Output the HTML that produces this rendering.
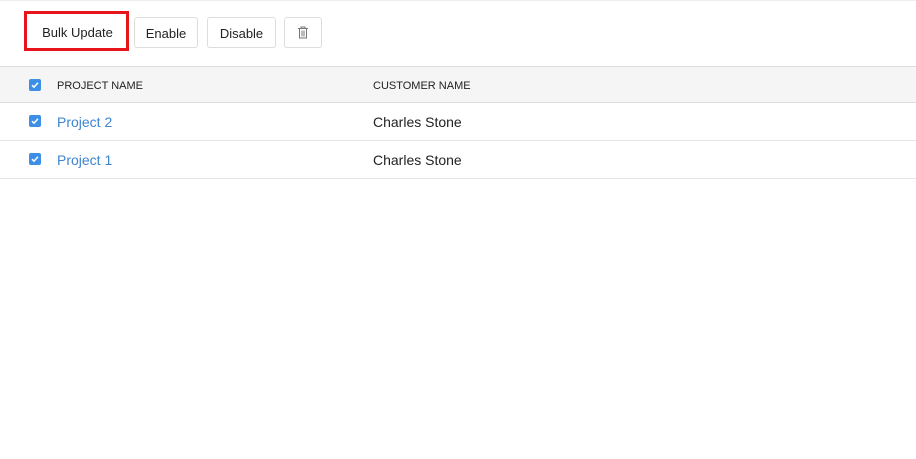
<!DOCTYPE html><html><head><style>
body{margin:0;width:916px;height:459px;background:#fff;font-family:"Liberation Sans",sans-serif;position:relative;overflow:hidden}
.top{position:absolute;left:0;top:0;width:916px;height:1px;background:#eee}
.btn{position:absolute;top:17px;height:31px;border:1px solid #ddd;border-radius:3px;font-size:13px;color:#222;line-height:31px;text-align:center;box-sizing:border-box;background:#fff}
.red{position:absolute;left:24px;top:11px;width:105px;height:40px;border:3px solid #e8141b;box-sizing:border-box}
.row{position:absolute;left:0;width:916px;border-bottom:1px solid #e5e5e5;box-sizing:border-box}
.cb{position:absolute;left:29px;width:12px;height:12px;background:#3d8fe6;border-radius:2px}
.cb svg{position:absolute;left:0;top:0}
.t{position:absolute;font-size:14px}
.h{font-size:11px;color:#222}
</style></head><body>
<div class="top"></div>
<div class="btn" style="left:30px;top:17px;width:95px;border:none">Bulk Update</div>
<div class="red"></div>
<div class="btn" style="left:134px;width:64px">Enable</div>
<div class="btn" style="left:207px;width:69px">Disable</div>
<div class="btn" style="left:284px;width:38px"><svg width="12" height="13" viewBox="0 0 12 13" style="margin-top:8px" fill="none" stroke="#777" stroke-width="1"><path d="M1 2.5h10M4 2.5V1h4v1.5M2.5 2.5v9.5h7V2.5M5 4.5v6M7 4.5v6"/></svg></div>
<div class="row" style="top:66px;height:37px;background:#f5f5f5;border-top:1px solid #ddd;border-bottom:1px solid #ddd"></div>
<div class="cb" style="top:79px"><svg width="12" height="12"><path d="M3 6.2l2 2 4-4.4" stroke="#fff" stroke-width="1.5" fill="none"/></svg></div>
<div class="t h" style="left:57px;top:80px">PROJECT NAME</div>
<div class="t h" style="left:373px;top:80px">CUSTOMER NAME</div>
<div class="row" style="top:103px;height:38px"></div>
<div class="cb" style="top:115px"><svg width="12" height="12"><path d="M3 6.2l2 2 4-4.4" stroke="#fff" stroke-width="1.5" fill="none"/></svg></div>
<div class="t" style="left:57px;top:114px;color:#3d85cf">Project 2</div>
<div class="t" style="left:373px;top:114px;color:#222">Charles Stone</div>
<div class="row" style="top:141px;height:38px"></div>
<div class="cb" style="top:153px"><svg width="12" height="12"><path d="M3 6.2l2 2 4-4.4" stroke="#fff" stroke-width="1.5" fill="none"/></svg></div>
<div class="t" style="left:57px;top:152px;color:#3d85cf">Project 1</div>
<div class="t" style="left:373px;top:152px;color:#222">Charles Stone</div>
</body></html>
